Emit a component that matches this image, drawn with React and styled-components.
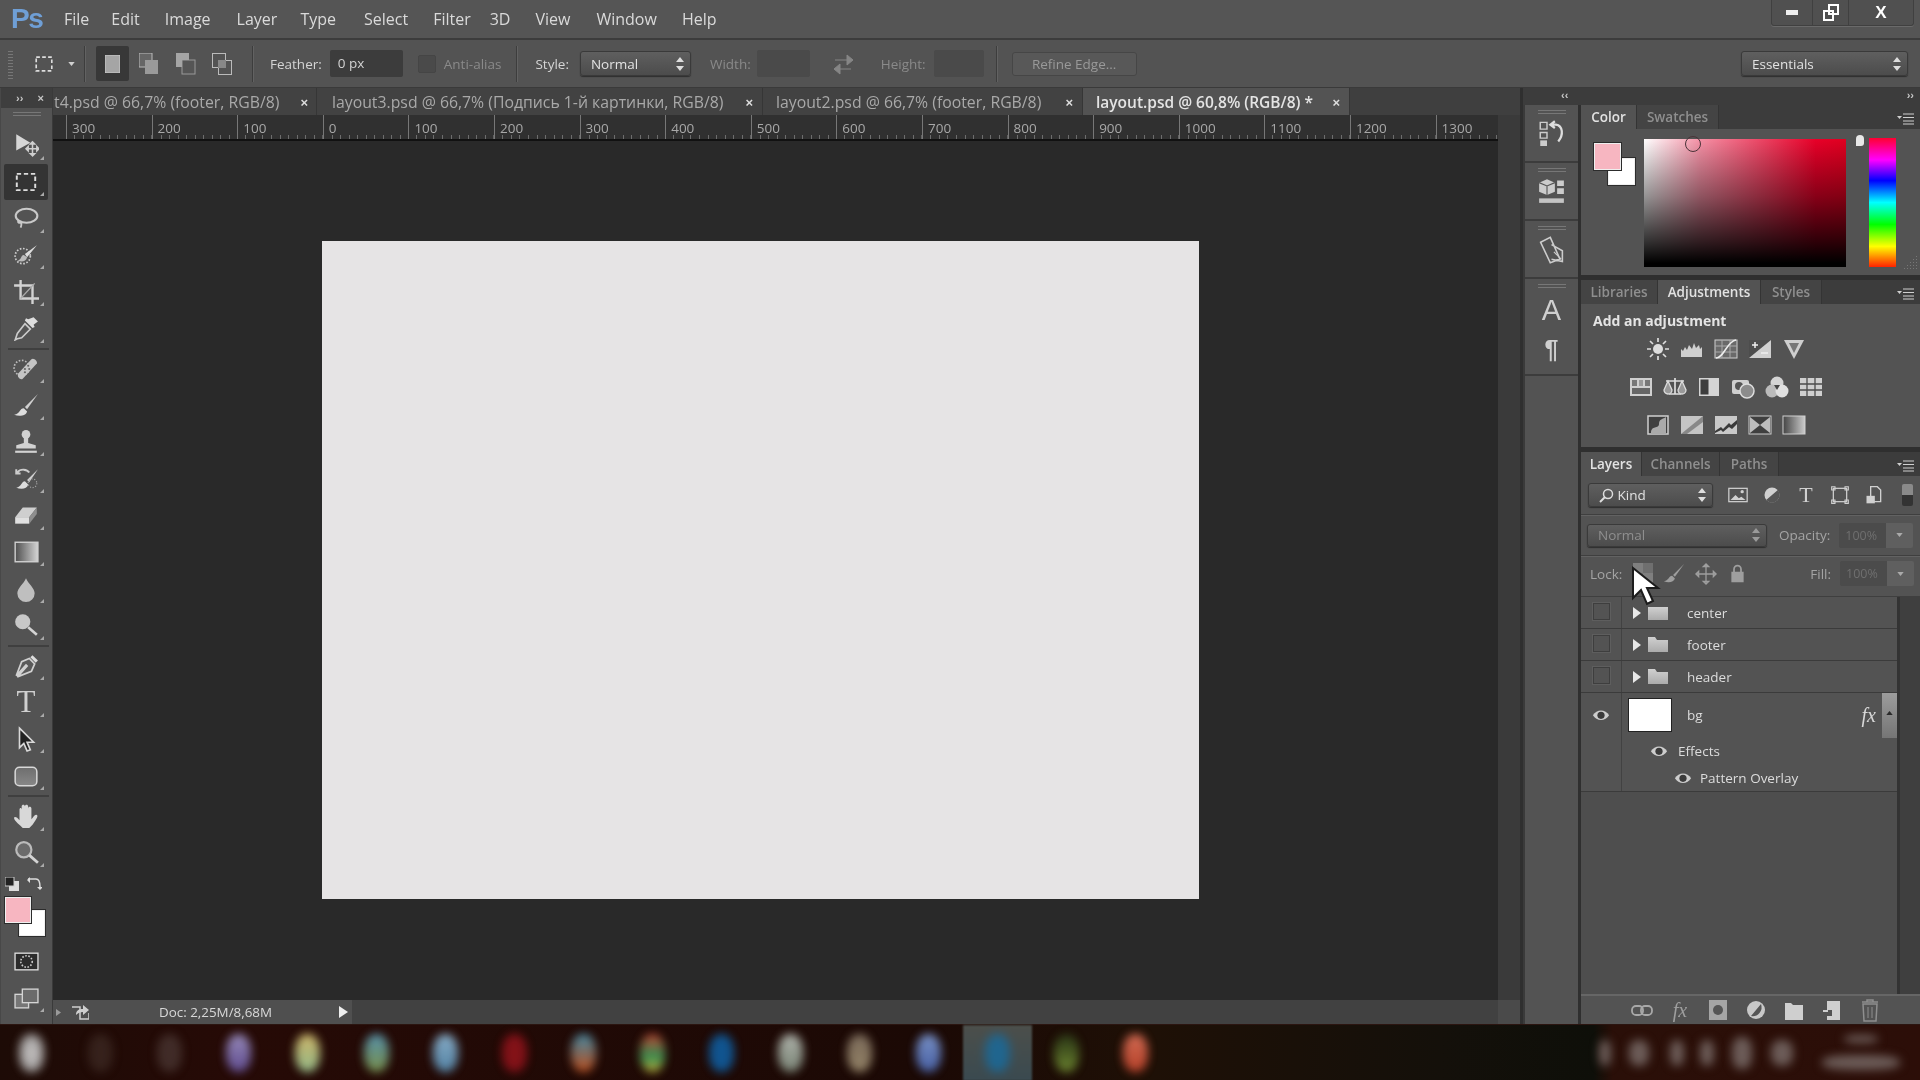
import React from 'react';
import styled, { createGlobalStyle } from 'styled-components';

const GlobalStyle = createGlobalStyle`
  html, body { margin: 0; padding: 0; background: #282828; overflow: hidden; }
  * { box-sizing: border-box; }
`;

const Frame = styled.div`
  width: 1920px;
  height: 1080px;
  display: flex;
  flex-direction: column;
  overflow: hidden;
  position: relative;
  background: #535353;
  font-family: "Open Sans", "Liberation Sans", sans-serif;
  font-size: 13.5px;
  color: #c8c8c8;
  filter: blur(0.6px);
`;

/* menu bar */
const MenuBar = styled.div`
  height: 40px;
  flex: none;
  display: flex;
  align-items: flex-start;
  background: #555;
  border-bottom: 2px solid #3c3c3c;
`;
const Logo = styled.div`
  width: 64px;
  padding: 0 0 0 11px;
  font: bold 28px/37px "Liberation Sans", sans-serif;
  letter-spacing: -1.5px;
  color: #6f9fd6;
`;
const MenuItem = styled.span`
  font-size: 16px;
  line-height: 38px;
  color: #dadada;
  margin-right: ${p => p.$gap}px;
`;
const WindowControls = styled.div`
  margin-left: auto;
  margin-right: 6px;
  width: 143px;
  height: 26px;
  display: grid;
  grid-template-columns: 40px 36px 1fr;
  background: #505050;
  border: 1px solid #404040;
  border-top: 0;
  border-radius: 0 0 3px 3px;
  box-shadow: 0 1px 0 #6a6a6a;
`;
const WinButton = styled.div`
  display: flex;
  align-items: center;
  justify-content: center;
  color: #fff;
  font: bold 17px/24px "Liberation Sans", sans-serif;
  & + & { border-left: 1px solid #404040; }
`;

/* options bar */
const OptionsBar = styled.div`
  height: 48px;
  flex: none;
  display: flex;
  align-items: center;
  background: #535353;
  border-bottom: 1px solid #3a3a3a;
`;
const Grip = styled.div`
  width: ${p => p.$w || 5}px;
  height: ${p => p.$h || 30}px;
  margin-left: ${p => p.$ml || 0}px;
  flex: none;
  background: repeating-linear-gradient(0deg, #777 0 1px, transparent 1px 3px);
`;
const Divider = styled.div`
  width: 1px;
  height: 36px;
  flex: none;
  background: #3d3d3d;
  box-shadow: 1px 0 0 #626262;
  margin-left: ${p => p.$ml || 0}px;
`;
const ModeBox = styled.div`
  width: 33px;
  height: 35px;
  flex: none;
  display: flex;
  align-items: center;
  justify-content: center;
  margin-left: ${p => p.$ml || 0}px;
  margin-right: ${p => p.$mr || 0}px;
  background: ${p => (p.$active ? '#383838' : 'transparent')};
  border-radius: 2px;
`;
const Label = styled.span`
  flex: none;
  margin-left: ${p => p.$ml || 0}px;
  color: ${p => (p.$dim ? '#8a8a8a' : '#d4d4d4')};
  font-size: 13.5px;
`;
const MutedLabel = styled(Label)`
  color: #a4a4a4;
`;
const TextInput = styled.div`
  flex: none;
  width: ${p => p.$w}px;
  height: 27px;
  margin-left: ${p => p.$ml || 0}px;
  padding-left: 8px;
  line-height: 27px;
  color: #d2d2d2;
  background: ${p => (p.$dim ? '#4a4a4a' : '#3c3c3c')};
  border-radius: 2px;
`;
const CheckBox = styled.div`
  flex: none;
  width: 18px;
  height: 18px;
  margin-left: ${p => p.$ml || 0}px;
  background: #4a4a4a;
  border: 1px solid #454545;
  border-radius: 2px;
`;
const Select = styled.div`
  flex: none;
  width: ${p => p.$w}px;
  height: ${p => p.$h || 25}px;
  margin-left: ${p => p.$ml || 0}px;
  margin-right: ${p => p.$mr || 0}px;
  display: flex;
  align-items: center;
  padding: 0 6px 0 10px;
  color: ${p => (p.$dim ? '#8f8f8f' : '#e2e2e2')};
  font-size: 13.5px;
  background: linear-gradient(#5f5f5f, #4c4c4c);
  border: 1px solid #3a3a3a;
  border-radius: 3px;
  box-shadow: 0 1px 1px #2e2e2e;
`;
const Updown = styled.svg`
  margin-left: auto;
  width: 8px;
  height: 14px;
  flex: none;
`;
const SwapIcon = styled.svg`
  flex: none;
  margin-left: 22px;
  width: 22px;
  height: 24px;
`;
const GhostButton = styled.div`
  flex: none;
  width: 125px;
  height: 24px;
  margin-left: 15px;
  line-height: 22px;
  text-align: center;
  color: #999;
  background: #585858;
  border: 1px solid #464646;
  border-radius: 3px;
`;
const Spacer = styled.div`
  flex: 1;
`;

/* workspace */
const Workspace = styled.div`
  flex: 1;
  min-height: 0;
  display: flex;
`;
const ToolColumn = styled.div`
  width: 53px;
  flex: none;
  display: flex;
  flex-direction: column;
  background: #535353;
  border-right: 1px solid #3a3a3a;
  border-left: 1px solid #484848;
`;
const ToolHead = styled.div`
  height: 20px;
  flex: none;
  display: flex;
  align-items: center;
  justify-content: space-between;
  padding: 0 8px 0 15px;
  background: #3e3e3e;
  color: #c8c8c8;
  font: bold 11px/20px "Liberation Sans", sans-serif;
`;
const ToolGrip = styled.div`
  height: 19px;
  flex: none;
  display: flex;
  justify-content: center;
  padding-top: 4px;
`;
const Tool = styled.div`
  height: 36.62px;
  margin: 0 4px 0 3px;
  flex: none;
  display: flex;
  align-items: center;
  justify-content: center;
  position: relative;
  background: ${p => (p.$active ? '#343434' : 'transparent')};
  border-radius: 2px;
  &::after {
    content: '';
    position: absolute;
    right: 4px;
    bottom: 4px;
    border-style: solid;
    border-width: 0 0 4px 4px;
    border-color: transparent transparent ${p => (p.$flag === false ? 'transparent' : '#aaa')} transparent;
  }
`;
const ToolRule = styled.div`
  height: 2px;
  margin: 1px 3px 1px 7px;
  flex: none;
  background: #3f3f3f;
`;
const ToolT = styled.span`
  font: 31px/36px "Liberation Serif", serif;
  color: #d0d0d0;
`;
const FilterT = styled(ToolT)`
  font-size: 22px;
  line-height: 22px;
`;
const MiniColors = styled.div`
  height: 23px;
  flex: none;
  display: flex;
  align-items: center;
  justify-content: space-between;
  padding: 2px 10px 0 4px;
`;
const Swatches = styled.div`
  height: 46px;
  flex: none;
  margin: 3px 0 0 4px;
  position: relative;
`;
const Swatch = styled.div`
  position: absolute;
  width: ${p => p.$s}px;
  height: ${p => p.$s}px;
  left: ${p => p.$x}px;
  top: ${p => p.$y}px;
  background: ${p => p.$c};
  border: 1px solid #efefef;
  box-shadow: 0 0 0 1px #2c2c2c;
`;

const DocColumn = styled.div`
  flex: 1;
  min-width: 0;
  display: flex;
  flex-direction: column;
`;
const TabBar = styled.div`
  height: 27px;
  flex: none;
  display: flex;
  overflow: hidden;
  background: #3f3f3f;
  white-space: nowrap;
`;
const DocTab = styled.div`
  flex: none;
  width: ${p => p.$w}px;
  display: flex;
  align-items: center;
  justify-content: space-between;
  padding: 1px ${p => p.$pr ?? 9}px 0 ${p => p.$pl ?? 13}px;
  color: ${p => (p.$active ? '#e4e4e4' : '#a9a9a9')};
  background: ${p => (p.$active ? '#535353' : '#424242')};
  border-right: 1px solid #363636;
  font-size: ${p => (p.$active ? 15.5 : 15.8)}px;
  font-weight: ${p => (p.$active ? 600 : 400)};
  overflow: hidden;
`;
const TabClose = styled.span`
  font: bold 13px "Liberation Sans", sans-serif;
  color: #ddd;
  flex: none;
`;
const RulerRow = styled.div`
  height: 26px;
  flex: none;
  display: flex;
`;
const Ruler = styled.div`
  flex: 1;
  min-width: 0;
  display: flex;
  overflow: hidden;
  padding-left: 13px;
  background: #303030;
  border-bottom: 2px solid #111;
`;
const RulerCell = styled.div`
  flex: none;
  width: 85.6px;
  padding: 4px 0 0 5px;
  font-size: 13.5px;
  line-height: 19px;
  color: #a8a8a8;
  border-left: 1px solid #777;
  background: repeating-linear-gradient(90deg, transparent 0 7.56px, #6d6d6d 7.56px 8.56px) bottom / 100% 4px no-repeat;
`;
const ScrollGutter = styled.div`
  width: 22px;
  flex: none;
  background: #3a3a3a;
`;
const CanvasRow = styled.div`
  flex: 1;
  min-height: 0;
  display: flex;
`;
const Canvas = styled.div`
  flex: 1;
  min-width: 0;
  padding: 100px 0 0 269px;
  background: #292929;
`;
const Document = styled.div`
  width: 877px;
  height: 658px;
  background: #e6e4e5;
`;
const StatusBar = styled.div`
  height: 24px;
  flex: none;
  display: flex;
  background: #414141;
`;
const StatusInfo = styled.div`
  width: 299px;
  flex: none;
  display: flex;
  align-items: center;
  padding: 0 4px 0 3px;
  background: #4f4f4f;
  font-size: 13.4px;
  color: #d8d8d8;
`;
const ScrollNub = styled.svg`
  width: 5px;
  height: 7px;
  margin-right: 10px;
  flex: none;
`;
const StatusText = styled.span`
  margin-left: 70px;
  margin-right: auto;
`;
const StatusEnd = styled.div`
  margin-left: auto;
  width: 22px;
  background: #4a4a4a;
`;

/* dock + panels */
const RightSide = styled.div`
  width: 400px;
  flex: none;
  display: flex;
  flex-direction: column;
  background: #2f2f2f;
  padding-left: 3px;
`;
const CollapseStrip = styled.div`
  height: 17px;
  flex: none;
  display: flex;
  justify-content: space-between;
  padding: 0 6px 0 38px;
  background: #3c3c3c;
  color: #c8c8c8;
  font: bold 11px/14px "Liberation Sans", sans-serif;
`;
const RightBody = styled.div`
  flex: 1;
  min-height: 0;
  display: flex;
  gap: 3px;
`;
const Dock = styled.div`
  width: 55px;
  flex: none;
  display: flex;
  flex-direction: column;
  background: #535353;
  border-left: 2px solid #3a3a3a;
`;
const DockGroup = styled.div`
  height: ${p => p.$h}px;
  flex: none;
  display: flex;
  flex-direction: column;
  align-items: center;
  gap: ${p => p.$gap || 0}px;
  padding-top: 5px;
  border-bottom: 2px solid #3c3c3c;
`;
const DockGlyph = styled.span`
  font: ${p => p.$font};
  color: #cfcfcf;
`;
const Panels = styled.div`
  flex: 1;
  min-width: 0;
  display: flex;
  flex-direction: column;
`;
const Panel = styled.div`
  height: ${p => (p.$h ? `${p.$h}px` : 'auto')};
  flex: ${p => (p.$h ? 'none' : 1)};
  min-height: 0;
  display: flex;
  flex-direction: column;
  margin-bottom: ${p => p.$mb || 0}px;
  background: #535353;
`;
const PanelTabs = styled.div`
  height: 24px;
  flex: none;
  display: flex;
  align-items: stretch;
  background: #3c3c3c;
`;
const PanelTab = styled.div`
  width: ${p => p.$w}px;
  flex: none;
  line-height: 25px;
  text-align: center;
  font-size: 13.5px;
  font-weight: 600;
  color: ${p => (p.$active ? '#e2e2e2' : '#8f8f8f')};
  background: ${p => (p.$active ? '#535353' : '#444')};
  border-right: 1px solid #343434;
`;
const PanelMenu = styled.div`
  margin: 6px 6px 0 auto;
`;
const ColorBody = styled.div`
  flex: 1;
  display: flex;
  align-items: flex-start;
  position: relative;
  padding-left: 13px;
`;
const ColorSwatches = styled.div`
  width: 41px;
  height: 43px;
  margin-top: 14px;
  flex: none;
  position: relative;
`;
const Spectrum = styled.div`
  width: 202px;
  height: 128px;
  margin: 10px 0 0 9px;
  flex: none;
  position: relative;
  background:
    linear-gradient(to bottom, transparent, rgba(0, 0, 0, 0.42) 45%, rgba(0, 0, 0, 0.8) 80%, #000 97%),
    linear-gradient(to right, #fff, #f590a5 28%, #ec4060 60%, #e80028 85%, #e00020);
`;
const PickRing = styled.div`
  position: absolute;
  left: 41px;
  top: -3px;
  width: 16px;
  height: 16px;
  border-radius: 50%;
  border: 1.5px solid #4a3338;
`;
const HueMark = styled.div`
  width: 8px;
  height: 11px;
  margin: 6px 0 0 10px;
  flex: none;
  background: #e8e8e8;
  border-radius: 4px 4px 3px 0;
`;
const Hue = styled.div`
  width: 27px;
  height: 129px;
  margin: 9px 0 0 5px;
  flex: none;
  background: linear-gradient(#ff0030, #f0f 17%, #00f 33%, #0ff 50%, #0f0 67%, #ff0 84%, #f20);
`;
const ResizeGrip = styled.div`
  position: absolute;
  right: 3px;
  bottom: 6px;
  width: 14px;
  height: 14px;
  background: radial-gradient(#777 40%, transparent 45%) 0 0 / 3px 3px;
  clip-path: polygon(100% 0, 100% 100%, 0 100%);
`;
const AdjBody = styled.div`
  flex: 1;
  padding: 7px 0 0 12px;
`;
const AdjTitle = styled.div`
  font-size: 14px;
  font-weight: 700;
  line-height: 19px;
  color: #e4e4e4;
`;
const AdjRow = styled.div`
  height: 38px;
  display: flex;
  align-items: center;
  justify-content: center;
  gap: 10px;
  margin-left: -12px;
  padding-right: 50px;
`;
const FilterRow = styled.div`
  height: 39px;
  flex: none;
  display: flex;
  align-items: center;
  padding-left: 7px;
  border-bottom: 1px solid #3f3f3f;
  box-shadow: 0 1px 0 #626262;
`;
const FilterIcon = styled.div`
  width: 34px;
  flex: none;
  display: flex;
  justify-content: center;
  margin-left: ${p => p.$ml || 0}px;
`;
const FilterToggle = styled.div`
  width: 11px;
  height: 22px;
  margin-left: 11px;
  flex: none;
  border-radius: 2px;
  background: linear-gradient(#8a8a8a 50%, #333 50%);
`;
const BlendRow = styled.div`
  height: ${p => p.$h}px;
  flex: none;
  display: flex;
  align-items: center;
  padding: 0 0 ${p => p.$pb || 0}px 6px;
  border-bottom: 1px solid #3f3f3f;
  box-shadow: ${p => (p.$line ? '0 1px 0 #626262' : 'none')};
`;
const Stepper = styled.div`
  margin-left: ${p => p.$ml || 0}px;
  width: 74px;
  height: 25px;
  flex: none;
  display: grid;
  grid-template-columns: 47px 1fr;
  border-radius: 2px;
  overflow: hidden;
`;
const StepValue = styled.div`
  background: #4b4b4b;
  color: #6f6f6f;
  padding-left: 6px;
  font-size: 12.5px;
  line-height: 25px;
`;
const StepArrow = styled.div`
  background: #5f5f5f;
  display: flex;
  align-items: center;
  justify-content: center;
`;
const LockIcons = styled.div`
  display: flex;
  margin-left: 11px;
  gap: 10px;
`;
const LayerBox = styled.div`
  flex: 1;
  min-height: 0;
  display: flex;
  position: relative;
`;
const LayerList = styled.div`
  width: 316px;
  flex: none;
  display: flex;
  flex-direction: column;
`;
const LayerRow = styled.div`
  height: ${p => p.$h}px;
  flex: none;
  display: flex;
  align-items: center;
  border-bottom: 1px solid #3b3b3b;
`;
const EyeCell = styled.div`
  width: 41px;
  height: 100%;
  flex: none;
  display: flex;
  align-items: center;
  justify-content: center;
  border-right: 1px solid #424242;
`;
const EyeTop = styled(EyeCell)`
  align-items: flex-start;
  padding-top: 16px;
`;
const EmptyCheck = styled.div`
  width: 17px;
  height: 17px;
  margin-top: -2px;
  border: 1px solid #3e3e3e;
  box-shadow: 0 0 0 1px #5e5e5e;
`;
const ExpandSlot = styled.span`
  width: 8px;
  margin-left: 11px;
  display: flex;
`;
const FolderSlot = styled.span`
  width: 20px;
  margin-left: 7px;
  display: flex;
`;
const LayerName = styled.span`
  font-size: 13.5px;
  color: #dcdcdc;
  margin-left: ${p => p.$ml || 0}px;
`;
const Thumb = styled.div`
  width: 44px;
  height: 34px;
  margin-left: 6px;
  flex: none;
  background: #fff;
  border: 1px solid #222;
`;
const FxMark = styled.span`
  margin-left: auto;
  margin-right: 21px;
  font: italic 20px "Liberation Serif", serif;
  color: #d8d8d8;
`;
const FootFx = styled(FxMark)`
  margin: 0;
  width: 24px;
  text-align: center;
  color: #9e9e9e;
`;
const BgRow = styled.div`
  height: 99px;
  flex: none;
  display: flex;
  border-bottom: 1px solid #3b3b3b;
`;
const BgMain = styled.div`
  flex: 1;
  min-width: 0;
  display: flex;
  flex-direction: column;
`;
const BgHead = styled.div`
  height: 44px;
  display: flex;
  align-items: center;
`;
const EffectRow = styled.div`
  height: ${p => p.$h}px;
  display: flex;
  align-items: center;
  padding-left: ${p => p.$pl}px;
  gap: ${p => p.$gap}px;
`;
const ListFill = styled.div`
  flex: 1;
  background: #4e4e4e;
`;
const LayerScroll = styled.div`
  flex: 1;
  background: #3f3f3f;
  border-left: 3px solid #333;
`;
const ScrollThumb = styled.div`
  position: absolute;
  left: 301px;
  top: 96px;
  width: 15px;
  height: 45px;
  display: flex;
  justify-content: center;
  padding-top: 18px;
  background: linear-gradient(#9c9c9c, #757575);
`;
const LayerFoot = styled.div`
  height: 30px;
  flex: none;
  display: flex;
  align-items: center;
  padding-left: 49px;
  gap: 14px;
  border-top: 2px solid #666;
`;
const Cursor = styled.svg`
  position: absolute;
  left: 1631px;
  top: 566px;
  width: 30px;
  height: 42px;
`;

/* blurred taskbar */
const Taskbar = styled.div`
  height: 56px;
  flex: none;
  display: flex;
  align-items: center;
  background: linear-gradient(90deg, #1d0b06, #260a06 12%, #1b0905 48%, #1e1006 60%, #14100a 75%, #0e0f09 83%, #2a0f08 84%, #2c0e08 100%);
  border-top: 1px solid #2b1510;
`;
const Slot = styled.div`
  width: 69px;
  height: 56px;
  flex: none;
  display: flex;
  align-items: center;
  justify-content: center;
  background: ${p => (p.$on ? 'linear-gradient(#4c4f4b, #3a4a50)' : 'transparent')};
  filter: blur(${p => (p.$on ? 1 : 0)}px);
  &:first-child { margin-left: -3px; }
`;
const Blob = styled.div`
  width: 25px;
  height: 38px;
  border-radius: 45%;
  background: ${p => p.$bg};
  opacity: 0.85;
  filter: blur(5px);
`;
const Tray = styled.div`
  margin-left: auto;
  display: flex;
  align-items: center;
  padding-right: 20px;
`;
const TrayBlob = styled.div`
  width: ${p => p.$w || 20}px;
  height: ${p => p.$h || 26}px;
  margin-left: ${p => p.$ml || 0}px;
  border-radius: 40%;
  background: #6c5c58;
  filter: blur(5px);
`;
const ClockStack = styled.div`
  margin-left: 29px;
  display: flex;
  flex-direction: column;
  align-items: center;
  gap: 12px;
`;

/* drawings */
const ic = '#c9c9c9';
const Svg = ({ s = 26, children }) => (
  <svg width={s} height={s} viewBox="0 0 24 24" fill="none">{children}</svg>
);

const tools = {
  move: <><path d="M3 2l13 8-13 7z" fill="#d6d6d6" /><path d="M18 10v11M13 15.500h10M18 9l-2 2h4zM18 22l-2-2h4zM12 15.500l2-2v4zM24 15.500l-2-2v4z" stroke="#cfcfcf" strokeWidth="1.400" /></>,
  marquee: <rect x="3.500" y="4.500" width="17" height="15" stroke="#ddd" strokeWidth="1.800" strokeDasharray="4 2.500" />,
  lasso: <><ellipse cx="12.500" cy="9" rx="10" ry="6.500" stroke={ic} strokeWidth="1.900" /><path d="M5 13c-1 3 1 3 2 2s1 3 0 5" stroke={ic} strokeWidth="1.700" /></>,
  quick: <><circle cx="9" cy="13" r="7" stroke="#ccc" strokeWidth="1.600" strokeDasharray="1.500 1.500" /><path d="M22 3L11 11l2 3z" fill="#ddd" /><path d="M10 12c-3 0-2 5-6 5 4 2 8 1 9-3z" fill="#bbb" /></>,
  crop: <><path d="M7 1v17h17M1 6h17v17" stroke="#d2d2d2" strokeWidth="2.200" /><path d="M7 18L20 4" stroke="#aaa" strokeWidth="1.200" /></>,
  dropper: <><path d="M19 2l4 4-4 3 1 2-2 1-7-7 1-2 2 1z" fill="#ddd" /><path d="M11 8l5 5-8 8-4 1-2 1 1-3 1-3z" stroke="#ccc" strokeWidth="1.500" fill="#555" /></>,
  heal: <><circle cx="8" cy="11" r="7" stroke="#bbb" strokeWidth="1.500" strokeDasharray="1.500 1.500" /><path d="M5 16L17 3c2-2 6 2 5 4L9 21c-2 2-6-2-4-5z" fill="#c4c4c4" /><circle cx="11" cy="12" r="1" fill="#666" /><circle cx="14" cy="9" r="1" fill="#666" /><circle cx="11" cy="15" r="1" fill="#666" /><circle cx="15" cy="12" r="1" fill="#666" /></>,
  brush: <><path d="M23 1L11 13l2 2z" fill="#d0d0d0" /><path d="M10 14c-4 0-3 5-9 6 5 2 11 1 12-3z" fill="#ddd" /></>,
  stamp: <><circle cx="12" cy="5" r="4" fill="#d2d2d2" /><path d="M10 8h4v5l7 2v3H3v-3l7-2z" fill="#d2d2d2" /><path d="M2 21h20" stroke="#d2d2d2" strokeWidth="2" /></>,
  history: <><path d="M4 6c3-4 9-3 11 0M3 3v4h4" stroke="#ccc" strokeWidth="1.800" /><path d="M23 3L13 13l2 2z" fill="#d0d0d0" /><path d="M11 14c-3 0-3 5-8 6 5 2 10 1 11-3z" fill="#ddd" /><circle cx="18" cy="16" r="4" stroke="#aaa" strokeDasharray="1 1.500" /></>,
  eraser: <><path d="M9 5h13l-7 9H2z" fill="#cfcfcf" /><path d="M2 14h13v6H2z" fill="#e0e0e0" /><path d="M15 14l7-9v6l-7 9z" fill="#8e8e8e" /></>,
  gradient: <><defs><linearGradient id="tg"><stop stopColor="#4e4e4e" /><stop offset="1" stopColor="#d4d4d4" /></linearGradient></defs><rect x="2" y="3" width="21" height="18" fill="url(#tg)" stroke="#d0d0d0" strokeWidth="1.300" /></>,
  blur: <path d="M12 2c2 5 8 9 8 14a8 8 0 01-16 0c0-5 6-9 8-14z" fill="#bfbfbf" />,
  smudge: <><circle cx="9" cy="9" r="7" fill="#c8c8c8" /><path d="M14 14l8 7" stroke="#d4d4d4" strokeWidth="2.400" /></>,
  pen: <><path d="M18 2l5 5-2 2-5-5z" fill="#ddd" /><path d="M15 5l5 5-3 7-13 5 9-10-1-1-9 10 5-13z" stroke="#d0d0d0" strokeWidth="1.600" fill="#5a5a5a" /></>,
  select: <path d="M6 2l13 13h-6l3 7-3 1-3-7-4 4z" fill="#222" stroke="#d8d8d8" strokeWidth="1.500" />,
  shape: <><defs><linearGradient id="ts" x2="0" y2="1"><stop stopColor="#6e6e6e" /><stop offset="1" stopColor="#888" /></linearGradient></defs><rect x="2" y="4" width="20" height="17" rx="4" fill="url(#ts)" stroke="#d8d8d8" strokeWidth="1.400" /></>,
  hand: <path d="M6 13V6c0-2 2-2 2 0v4-7c0-2 3-2 3 0v7V3c0-2 3-2 3 0v7-5c0-2 3-2 3 0v10c2-2 3-5 5-4s-2 6-4 9l-3 3H9c-2-2-8-7-8-9s3-1 5 2z" fill="#d8d8d8" />,
  zoom: <><circle cx="10" cy="9" r="7" fill="#6b6b6b" stroke="#bbb" strokeWidth="2" /><path d="M15 14l8 7" stroke="#d4d4d4" strokeWidth="2.600" /></>,
  mask: <><rect x="1" y="4" width="22" height="16" fill="#2c2c2c" stroke="#ddd" strokeWidth="1.300" /><circle cx="12" cy="12" r="5.500" stroke="#ccc" strokeWidth="1.500" strokeDasharray="1.500 1.500" /></>,
  screen: <><rect x="1" y="8" width="13" height="13" fill="#767676" stroke="#d4d4d4" strokeWidth="1.300" /><rect x="8" y="3" width="15" height="13" fill="#6b6b6b" stroke="#d4d4d4" strokeWidth="1.300" /></>
};

const Tri = ({ c = '#ddd', w = 8, h = 5, up }) => (
  <svg width={w} height={h} viewBox="0 0 8 5"><path d={up ? 'M4 0l4 5H0z' : 'M0 0h8L4 5z'} fill={c} /></svg>
);
const UpDownArrows = ({ c = '#ddd' }) => (
  <Updown viewBox="0 0 8 14"><path d="M4 0l4 5H0zM4 14L0 9h8z" fill={c} /></Updown>
);
const MenuLines = () => (
  <svg width="17" height="12" viewBox="0 0 17 12"><path d="M6 1h11M6 4.500h11M6 8h11M6 11h11" stroke="#cfcfcf" /><path d="M0 3h5L2.500 6z" fill="#cfcfcf" /></svg>
);
const Eye = ({ s = 18 }) => (
  <svg width={s} height={s * 0.7} viewBox="0 0 20 14"><path d="M1 7c4-7 14-7 18 0-4 7-14 7-18 0z" fill="#cdcdcd" /><circle cx="10" cy="7" r="4" fill="#3b3b3b" /></svg>
);
const Folder = ({ notch }) => (
  <svg width="20" height="15" viewBox="0 0 20 15"><defs><linearGradient id="fg" x2="0" y2="1"><stop stopColor="#d0d0d0" /><stop offset="1" stopColor="#ababab" /></linearGradient></defs><path d={notch ? 'M0 0h7l2 3h11v12H0z' : 'M0 2h20v13H0z'} fill="url(#fg)" /></svg>
);
const Expand = () => (
  <svg width="8" height="12" viewBox="0 0 8 12"><path d="M0 0l8 6-8 6z" fill="#e8e8e8" /></svg>
);

const adjust = {
  sun: <><circle cx="12" cy="12" r="5" fill="#ddd" /><path d="M12 1v4M12 19v4M1 12h4M19 12h4M4 4l3 3M17 17l3 3M4 20l3-3M17 7l3-3" stroke="#ddd" strokeWidth="1.700" /></>,
  levels: <path d="M1 20V12l2 2 2-4 2 3 2-5 3 4 2-6 2 5 3-3 1 4 2-2v10z" fill="#cfcfcf" />,
  curves: <><rect x="1" y="3" width="22" height="18" fill="#6a6a6a" stroke="#cfcfcf" /><path d="M1 9h22M1 15h22M8 3v18M16 3v18" stroke="#aaa" /><path d="M2 21c8 0 11-17 20-18" stroke="#eee" strokeWidth="1.500" /></>,
  expo: <><rect x="1" y="3" width="22" height="18" fill="#cfcfcf" /><path d="M1 21L23 3H1z" fill="#4d4d4d" /><path d="M4 8h6M7 5v6M13 16h7" stroke="#eee" strokeWidth="1.500" /></>,
  vib: <><path d="M2 3h20L12 22z" fill="#cfcfcf" /><path d="M7 6h10l-5 10z" fill="#777" /></>,
  hue: <><rect x="1" y="3" width="22" height="18" fill="#cfcfcf" /><rect x="3" y="5" width="5" height="6" fill="#777" /><rect x="10" y="5" width="4" height="6" fill="#999" /><rect x="16" y="5" width="5" height="6" fill="#777" /><rect x="3" y="13" width="18" height="6" fill="#666" /></>,
  bal: <><path d="M12 3v16M3 6h18M6 19h12" stroke="#ddd" strokeWidth="1.700" /><path d="M1 15l4-9 4 9a4 4 0 01-8 0zM15 15l4-9 4 9a4 4 0 01-8 0z" stroke="#ddd" strokeWidth="1.300" fill="#999" /></>,
  bw: <><rect x="2" y="3" width="20" height="18" fill="#d4d4d4" /><rect x="3.500" y="4.500" width="8" height="15" fill="#3d3d3d" /></>,
  photo: <><rect x="1" y="5" width="17" height="14" rx="2" fill="#cfcfcf" /><circle cx="8" cy="11" r="4" fill="#555" /><circle cx="16" cy="16" r="7" fill="#8c8c8c" stroke="#ddd" strokeWidth="1.500" /></>,
  mixer: <><circle cx="12" cy="8" r="6.500" fill="#d4d4d4" /><circle cx="7" cy="16" r="6.500" fill="#bbb" /><circle cx="17" cy="16" r="6.500" fill="#e0e0e0" /><path d="M9 10h6l-3 5z" fill="#444" /></>,
  table: <><rect x="1" y="3" width="22" height="18" fill="#cfcfcf" /><path d="M1 9h22M1 15h22M8 3v18M16 3v18" stroke="#4c4c4c" strokeWidth="1.300" /></>,
  invert: <><rect x="2" y="3" width="20" height="18" fill="#3f3f3f" stroke="#cfcfcf" strokeWidth="1.500" /><path d="M5 20c0-8 8-4 8-9s4-5 7-7v16z" fill="#aaa" /></>,
  post: <><rect x="1" y="3" width="22" height="18" fill="#c4c4c4" /><path d="M1 21L23 3v6L7 21z" fill="#888" /></>,
  thresh: <><rect x="1" y="3" width="22" height="18" fill="#c9c9c9" /><path d="M1 18l6-4 2 2 6-6 2 2 6-5v4l-5 5-3-2-6 5-2-2-6 3z" fill="#3a3a3a" /></>,
  map: <><rect x="1" y="3" width="22" height="18" fill="#3f3f3f" stroke="#cfcfcf" /><path d="M2 4l10 8 10-8v16l-10-8-10 8z" fill="#bdbdbd" /></>,
  grad: <><defs><linearGradient id="ag"><stop stopColor="#444" /><stop offset="1" stopColor="#ccc" /></linearGradient></defs><rect x="1" y="3" width="22" height="18" fill="url(#ag)" stroke="#cfcfcf" /></>
};

const filterIcons = {
  image: <><rect x="1" y="4" width="22" height="16" stroke="#d0d0d0" strokeWidth="1.500" /><path d="M3 18l6-6 4 4 3-2 5 4z" fill="#d0d0d0" /><circle cx="17" cy="8" r="2" fill="#d0d0d0" /></>,
  adj: <><circle cx="12" cy="12" r="9" fill="#d0d0d0" /><path d="M5 18L19 6a9 9 0 01-14 12z" fill="#555" /></>,
  shape: <><rect x="4" y="4" width="16" height="16" stroke="#d0d0d0" strokeWidth="1.500" /><path d="M2 2h4v4H2zM18 2h4v4h-4zM2 18h4v4H2zM18 18h4v4h-4z" stroke="#d0d0d0" strokeWidth="1.300" /></>,
  smart: <><path d="M8 2h8l4 4v14H8z" stroke="#d0d0d0" strokeWidth="1.600" /><rect x="3" y="13" width="10" height="9" fill="#d0d0d0" /></>
};

const lockIcons = {
  brush: <><path d="M23 1L11 13l2 2z" fill="#9e9e9e" /><path d="M10 14c-4 0-3 5-9 6 5 2 11 1 12-3z" fill="#9e9e9e" /></>,
  move: <path d="M12 2v20M2 12h20M12 1l-3 3h6zM12 23l-3-3h6zM1 12l3-3v6zM23 12l-3-3v6z" stroke="#9e9e9e" strokeWidth="1.400" />,
  lock: <><path d="M8 11V7a4 4 0 018 0v4" stroke="#9e9e9e" strokeWidth="2" /><rect x="5" y="10" width="14" height="12" fill="#9e9e9e" /></>
};

const footIcons = [
  <><rect x="2" y="8" width="11" height="9" rx="4" stroke="#a8a8a8" strokeWidth="1.800" /><rect x="11" y="8" width="11" height="9" rx="4" stroke="#a8a8a8" strokeWidth="1.800" /></>,
  null,
  <><rect x="3" y="2" width="18" height="20" fill="#a5a5a5" /><circle cx="12" cy="12" r="5" fill="#555" /></>,
  <><circle cx="12" cy="12" r="9" fill="#c8c8c8" /><path d="M7 18L17 6a9 9 0 01-10 12z" fill="#555" /></>,
  <path d="M3 5h6l2 2h10v15H3z" fill="#cfcfcf" />,
  <><path d="M7 3h13v19H7z" fill="#cfcfcf" /><path d="M3 12h9v6H3z" fill="#535353" /><path d="M3 12h5v2H3z" fill="#cfcfcf" /></>,
  <><path d="M5 6h14l-1 17H6zM4 4h16M9 4V2h6v2" stroke="#8f8f8f" strokeWidth="1.500" /><path d="M10 9v11M14 9v11" stroke="#8f8f8f" /></>
];

const menus = [
  ['File', 22], ['Edit', 25], ['Image', 26], ['Layer', 23], ['Type', 28], ['Select', 25],
  ['Filter', 19], ['3D', 25], ['View', 26], ['Window', 25], ['Help', 0]
];

const rulerLabels = [300, 200, 100, 0, 100, 200, 300, 400, 500, 600, 700, 800, 900, 1000, 1100, 1200, 1300];

const taskIcons = [
  'radial-gradient(#e8e8e8, #999)', '#3a2620', '#46322e', 'linear-gradient(#a9a0d8, #6a58a8)',
  'linear-gradient(#ead27a, #a6d8a0)', 'linear-gradient(#5fa8c8, #88a858)', 'linear-gradient(#98c8e8, #5c98c0)',
  '#94141c', 'linear-gradient(#4aa0c0, #d85a20)', 'linear-gradient(#d84a3a, #38a860 60%, #e8c840)',
  '#0f62a8', 'linear-gradient(#c8d0c8, #8a9a8a)', 'linear-gradient(#8a7a68, #a89878)', 'linear-gradient(#88a8e8, #5070c0)',
  '#1a6a9a', 'linear-gradient(#2a3a18, #7a9a38)', 'linear-gradient(#f07a60, #d04a30)'
];

export default function App() {
  return (
    <Frame>
      <GlobalStyle />
      <MenuBar>
        <Logo>Ps</Logo>
        {menus.map(([name, gap]) => <MenuItem key={name} $gap={gap}>{name}</MenuItem>)}
        <WindowControls>
          <WinButton><svg width="12" height="5"><rect width="12" height="5" fill="#eee" /></svg></WinButton>
          <WinButton><svg width="16" height="17" viewBox="0 0 16 17" fill="none"><path d="M6 1h9v9H6zM1 7h9v9H1z" stroke="#fff" strokeWidth="2" /></svg></WinButton>
          <WinButton>X</WinButton>
        </WindowControls>
      </MenuBar>

      <OptionsBar>
        <Grip $ml={8} />
        <ModeBox $ml={14} $mr={8}><Svg s={22}>{tools.marquee}</Svg></ModeBox>
        <Tri c="#d0d0d0" w={7} h={4} />
        <Divider $ml={9} />
        <ModeBox $active $ml={11}><svg width="15" height="18"><rect width="15" height="18" fill="#a5a5a5" stroke="#ccc" /></svg></ModeBox>
        <ModeBox $ml={3}><svg width="20" height="22"><rect width="13" height="14" fill="#666" stroke="#bbb" /><rect x="6" y="7" width="13" height="14" fill="#9a9a9a" /></svg></ModeBox>
        <ModeBox $ml={4}><svg width="20" height="22"><rect x="6" y="7" width="13" height="14" fill="#555" stroke="#999" /><path d="M0 0h13v7H6v7H0z" fill="#a5a5a5" /></svg></ModeBox>
        <ModeBox $ml={3}><svg width="20" height="22" fill="none"><rect x=".5" y=".5" width="13" height="14" stroke="#bbb" /><rect x="6.500" y="7.500" width="13" height="14" stroke="#bbb" /><rect x="6" y="7" width="8" height="8" fill="#888" /></svg></ModeBox>
        <Divider $ml={14} />
        <Label $ml={17}>Feather:</Label>
        <TextInput $w={73} $ml={8}>0 px</TextInput>
        <CheckBox $ml={15} />
        <Label $dim $ml={8}>Anti-alias</Label>
        <Divider $ml={15} />
        <Label $ml={18}>Style:</Label>
        <Select $w={111} $ml={11}>Normal<UpDownArrows /></Select>
        <Label $dim $ml={19}>Width:</Label>
        <TextInput $dim $w={53} $ml={6} />
        <SwapIcon viewBox="0 0 22 24"><path d="M3 8h12M15 3l6 5-6 5zM19 17H8M8 12l-6 5 6 5z" fill="#868686" stroke="#868686" /></SwapIcon>
        <Label $dim $ml={27}>Height:</Label>
        <TextInput $dim $w={50} $ml={8} />
        <Divider $ml={12} />
        <GhostButton>Refine Edge...</GhostButton>
        <Spacer />
        <Select $w={167} $mr={12}>Essentials<UpDownArrows /></Select>
      </OptionsBar>

      <Workspace>
        <ToolColumn>
          <ToolHead><span>››</span><span>×</span></ToolHead>
          <ToolGrip><Grip $w={28} $h={4} /></ToolGrip>
          {['move', 'marquee', 'lasso', 'quick', 'crop', 'dropper'].map(t => <Tool key={t} $active={t === 'marquee'}><Svg>{tools[t]}</Svg></Tool>)}
          <ToolRule />
          {['heal', 'brush', 'stamp', 'history', 'eraser', 'gradient', 'blur', 'smudge'].map(t => <Tool key={t}><Svg>{tools[t]}</Svg></Tool>)}
          <ToolRule />
          <Tool><Svg>{tools.pen}</Svg></Tool>
          <Tool><ToolT>T</ToolT></Tool>
          <Tool><Svg>{tools.select}</Svg></Tool>
          <Tool><Svg>{tools.shape}</Svg></Tool>
          <ToolRule />
          <Tool><Svg>{tools.hand}</Svg></Tool>
          <Tool><Svg>{tools.zoom}</Svg></Tool>
          <MiniColors>
            <svg width="14" height="14"><rect x="4" y="4" width="10" height="10" fill="#ddd" /><rect width="9" height="9" fill="#222" stroke="#ccc" /></svg>
            <svg width="16" height="14" viewBox="0 0 16 14" fill="none"><path d="M2 2h8c3 0 4 3 4 8" stroke="#ddd" strokeWidth="1.500" /><path d="M1 3l3-3v6zM14 13l-3-3h6z" fill="#ddd" /></svg>
          </MiniColors>
          <Swatches>
            <Swatch $s={26} $x={14} $y={13} $c="#fff" />
            <Swatch $s={26} $x={0} $y={0} $c="#f7b6c1" />
          </Swatches>
          <Tool $flag={false}><Svg s={25}>{tools.mask}</Svg></Tool>
          <Tool><Svg s={25}>{tools.screen}</Svg></Tool>
        </ToolColumn>

        <DocColumn>
          <TabBar>
            <DocTab $w={264} $pl={1} $pr={8}>t4.psd @ 66,7% (footer, RGB/8)<TabClose>×</TabClose></DocTab>
            <DocTab $w={446} $pl={15}>layout3.psd @ 66,7% (Подпись 1-й картинки, RGB/8)<TabClose>×</TabClose></DocTab>
            <DocTab $w={320}>layout2.psd @ 66,7% (footer, RGB/8)<TabClose>×</TabClose></DocTab>
            <DocTab $w={267} $active>layout.psd @ 60,8% (RGB/8) *<TabClose>×</TabClose></DocTab>
          </TabBar>
          <RulerRow>
            <Ruler>{rulerLabels.map((n, i) => <RulerCell key={i}>{n}</RulerCell>)}</Ruler>
            <ScrollGutter />
          </RulerRow>
          <CanvasRow>
            <Canvas><Document /></Canvas>
            <ScrollGutter />
          </CanvasRow>
          <StatusBar>
            <StatusInfo>
              <ScrollNub viewBox="0 0 5 7"><path d="M0 0l5 3.500L0 7z" fill="#9a9a9a" /></ScrollNub>
              <svg width="18" height="16" viewBox="0 0 18 16"><path d="M1 3h8v12h9V9" stroke="#cfcfcf" strokeWidth="1.500" fill="none" /><path d="M5 11c0-5 3-6 7-6V1l6 5-6 5V8c-3 0-5 1-7 3z" fill="#cfcfcf" /></svg>
              <StatusText>Doc: 2,25M/8,68M</StatusText>
              <svg width="9" height="12"><path d="M0 0l9 6-9 6z" fill="#eee" /></svg>
            </StatusInfo>
            <StatusEnd />
          </StatusBar>
        </DocColumn>

        <RightSide>
          <CollapseStrip><span>‹‹</span><span>››</span></CollapseStrip>
          <RightBody>
            <Dock>
              <DockGroup $h={58} $gap={5}>
                <Grip $w={28} $h={4} />
                <Svg s={27}><path d="M2 3h6v6H2zM2 12h6v5H2z" stroke="#ccc" strokeWidth="1.300" /><path d="M2 19h6v5H2z" fill="#ccc" /><path d="M12 5h4c6 1 7 9 2 15M15 2l-4 3 4 3" stroke="#ddd" strokeWidth="2" /></Svg>
              </DockGroup>
              <DockGroup $h={58} $gap={5}>
                <Grip $w={28} $h={4} />
                <Svg s={27}><path d="M8 2l7 3v8l-7 3-7-3V5z" fill="#ccc" /><path d="M8 8v8M1 5l7 3 7-3" stroke="#555" /><path d="M17 3h6v5h-6zM17 10h6v5h-6z" fill="#ccc" /><rect x="1" y="19" width="22" height="4" fill="#c4c4c4" /></Svg>
              </DockGroup>
              <DockGroup $h={58} $gap={5}>
                <Grip $w={28} $h={4} />
                <Svg s={29}><path d="M3 6l8-4 8 18-8 3zM12 8l9 5v9l-9-2" stroke="#ccc" strokeWidth="1.300" /><path d="M14 14l6 6" stroke="#ccc" /></Svg>
              </DockGroup>
              <DockGroup $h={97} $gap={4}>
                <Grip $w={28} $h={4} />
                <DockGlyph $font={'29px/36px "Liberation Sans", sans-serif'}>A</DockGlyph>
                <DockGlyph $font={'bold 25px/34px "Liberation Sans", sans-serif'}>¶</DockGlyph>
              </DockGroup>
            </Dock>

            <Panels>
              <Panel $h={170} $mb={5}>
                <PanelTabs>
                  <PanelTab $active $w={56}>Color</PanelTab>
                  <PanelTab $w={82}>Swatches</PanelTab>
                  <PanelMenu><MenuLines /></PanelMenu>
                </PanelTabs>
                <ColorBody>
                  <ColorSwatches>
                    <Swatch $s={27} $x={14} $y={15} $c="#fff" />
                    <Swatch $s={27} $x={0} $y={0} $c="#f7b6c1" />
                  </ColorSwatches>
                  <Spectrum><PickRing /></Spectrum>
                  <HueMark />
                  <Hue />
                  <ResizeGrip />
                </ColorBody>
              </Panel>

              <Panel $h={167} $mb={5}>
                <PanelTabs>
                  <PanelTab $w={77}>Libraries</PanelTab>
                  <PanelTab $active $w={103}>Adjustments</PanelTab>
                  <PanelTab $w={61}>Styles</PanelTab>
                  <PanelMenu><MenuLines /></PanelMenu>
                </PanelTabs>
                <AdjBody>
                  <AdjTitle>Add an adjustment</AdjTitle>
                  <AdjRow>{['sun', 'levels', 'curves', 'expo', 'vib'].map(k => <Svg key={k} s={24}>{adjust[k]}</Svg>)}</AdjRow>
                  <AdjRow>{['hue', 'bal', 'bw', 'photo', 'mixer', 'table'].map(k => <Svg key={k} s={24}>{adjust[k]}</Svg>)}</AdjRow>
                  <AdjRow>{['invert', 'post', 'thresh', 'map', 'grad'].map(k => <Svg key={k} s={24}>{adjust[k]}</Svg>)}</AdjRow>
                </AdjBody>
              </Panel>

              <Panel>
                <PanelTabs>
                  <PanelTab $active $w={61}>Layers</PanelTab>
                  <PanelTab $w={78}>Channels</PanelTab>
                  <PanelTab $w={59}>Paths</PanelTab>
                  <PanelMenu><MenuLines /></PanelMenu>
                </PanelTabs>
                <FilterRow>
                  <Select $w={125} $h={24}>
                    <svg width="15" height="15" viewBox="0 0 15 15" fill="none"><circle cx="9" cy="6" r="4.500" stroke="#ddd" strokeWidth="1.500" /><path d="M6 9l-5 5" stroke="#ddd" strokeWidth="2" /></svg>
                    &nbsp;Kind<UpDownArrows />
                  </Select>
                  <FilterIcon $ml={8}><Svg s={20}>{filterIcons.image}</Svg></FilterIcon>
                  <FilterIcon><Svg s={20}>{filterIcons.adj}</Svg></FilterIcon>
                  <FilterIcon><FilterT>T</FilterT></FilterIcon>
                  <FilterIcon><Svg s={20}>{filterIcons.shape}</Svg></FilterIcon>
                  <FilterIcon><Svg s={20}>{filterIcons.smart}</Svg></FilterIcon>
                  <FilterToggle />
                </FilterRow>
                <BlendRow $h={41} $line>
                  <Select $dim $w={180} $h={23}>Normal<UpDownArrows c="#9a9a9a" /></Select>
                  <MutedLabel $ml={12}>Opacity:</MutedLabel>
                  <Stepper $ml={9}><StepValue>100%</StepValue><StepArrow><Tri c="#aaa" w={7} h={4} /></StepArrow></Stepper>
                </BlendRow>
                <BlendRow $h={41} $pb={5}>
                  <MutedLabel $ml={3}>Lock:</MutedLabel>
                  <LockIcons>
                    <svg width="20" height="20"><rect width="20" height="20" fill="#6f6f6f" /><rect width="10" height="10" fill="#7f7f7f" /><rect x="10" y="10" width="10" height="10" fill="#7f7f7f" /></svg>
                    <Svg s={22}>{lockIcons.brush}</Svg>
                    <Svg s={22}>{lockIcons.move}</Svg>
                    <Svg s={21}>{lockIcons.lock}</Svg>
                  </LockIcons>
                  <MutedLabel $ml={62}>Fill:</MutedLabel>
                  <Stepper $ml={9}><StepValue>100%</StepValue><StepArrow><Tri c="#aaa" w={7} h={4} /></StepArrow></Stepper>
                </BlendRow>
                <LayerBox>
                  <LayerList>
                    {['center', 'footer', 'header'].map((name, i) => (
                      <LayerRow key={name} $h={32}>
                        <EyeCell><EmptyCheck /></EyeCell>
                        <ExpandSlot><Expand /></ExpandSlot>
                        <FolderSlot><Folder notch={i > 0} /></FolderSlot>
                        <LayerName $ml={19}>{name}</LayerName>
                      </LayerRow>
                    ))}
                    <BgRow>
                      <EyeTop><Eye /></EyeTop>
                      <BgMain>
                        <BgHead>
                          <Thumb />
                          <LayerName $ml={15}>bg</LayerName>
                          <FxMark>fx</FxMark>
                        </BgHead>
                        <EffectRow $h={28} $pl={28} $gap={10}><Eye /><LayerName>Effects</LayerName></EffectRow>
                        <EffectRow $h={26} $pl={52} $gap={8}><Eye /><LayerName>Pattern Overlay</LayerName></EffectRow>
                      </BgMain>
                    </BgRow>
                    <ListFill />
                  </LayerList>
                  <LayerScroll />
                  <ScrollThumb><Tri c="#2a2a2a" w={7} h={4} up /></ScrollThumb>
                </LayerBox>
                <LayerFoot>
                  {footIcons.map((icon, i) => (icon
                    ? <Svg key={i} s={24}>{icon}</Svg>
                    : <FootFx key={i}>fx</FootFx>))}
                </LayerFoot>
              </Panel>
            </Panels>
          </RightBody>
        </RightSide>
      </Workspace>

      <Taskbar>
        {taskIcons.map((bg, i) => <Slot key={i} $on={i === 14}><Blob $bg={bg} /></Slot>)}
        <Tray>
          <TrayBlob $w={12} />
          <TrayBlob $ml={18} />
          <TrayBlob $w={14} $ml={21} />
          <TrayBlob $w={14} $ml={16} />
          <TrayBlob $h={32} $ml={18} />
          <TrayBlob $w={22} $ml={19} />
          <ClockStack>
            <TrayBlob $w={34} $h={8} />
            <TrayBlob $w={78} $h={15} />
          </ClockStack>
        </Tray>
      </Taskbar>

      <Cursor viewBox="0 0 30 42"><path d="M2 2v30l8-8 6 14 6-3-6-13h11z" fill="#fff" stroke="#1c1c1c" strokeWidth="2" /></Cursor>
    </Frame>
  );
}
